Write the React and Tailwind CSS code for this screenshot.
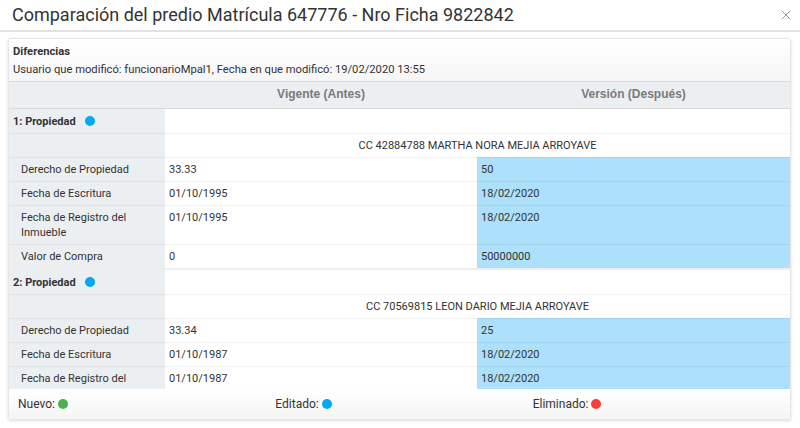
import React from 'react';
import { X } from 'lucide-react';

const propiedades = [
  {
    id: 1,
    titular: 'CC 42884788 MARTHA NORA MEJIA ARROYAVE',
    filas: [
      { label: 'Derecho de Propiedad', antes: '33.33', despues: '50' },
      { label: 'Fecha de Escritura', antes: '01/10/1995', despues: '18/02/2020' },
      { label: 'Fecha de Registro del Inmueble', antes: '01/10/1995', despues: '18/02/2020' },
      { label: 'Valor de Compra', antes: '0', despues: '50000000' },
    ],
  },
  {
    id: 2,
    titular: 'CC 70569815 LEON DARIO MEJIA ARROYAVE',
    filas: [
      { label: 'Derecho de Propiedad', antes: '33.34', despues: '25' },
      { label: 'Fecha de Escritura', antes: '01/10/1987', despues: '18/02/2020' },
      { label: 'Fecha de Registro del Inmueble', antes: '01/10/1987', despues: '18/02/2020' },
      { label: 'Valor de Compra', antes: '0', despues: '50000000' },
    ],
  },
];

const Dot = ({ color }) => <span className={`inline-block w-[10px] h-[10px] rounded-full ${color}`}></span>;

const PropiedadBody = ({ prop, first }) => (
  <tbody className={first ? '' : 'border-t-2 border-[#eeeeee]'}>
    {/* Encabezado de la propiedad */}
    <tr className="border-t border-black/5">
      <td className="bg-[#eceff1] pl-1 pr-1 pt-[5px] pb-[4px] align-top">
        <span className="font-bold text-[#333]">{prop.id}: Propiedad</span>
        <span className="ml-[9px] relative top-[1px]"><Dot color="bg-[#03a9f4]" /></span>
      </td>
      <td colSpan={2} className="bg-white"></td>
    </tr>
    <tr className="border-t border-black/5">
      <td className="bg-[#eceff1] py-[4px]">&nbsp;</td>
      <td colSpan={2} className="bg-white text-center py-[4px]">{prop.titular}</td>
    </tr>
    {prop.filas.map((f) => (
      <tr key={f.label} className="border-t border-black/5">
        <td className="bg-[#eceff1] pl-3 pr-2 py-[4px] align-top">{f.label}</td>
        <td className="bg-white px-1 py-[4px] align-top">{f.antes}</td>
        <td className="bg-[#ade0fa] px-1 py-[4px] align-top">{f.despues}</td>
      </tr>
    ))}
  </tbody>
);

const App = () => {
  return (
    <div className="w-[800px] h-[428px] bg-white overflow-hidden" style={{ fontFamily: 'Roboto, "Liberation Sans", sans-serif' }}>
      {/* Encabezado del modal */}
      <div className="h-[32px] flex items-center justify-between pl-3 pr-[6px] border-b-2 border-[#e2e2e2]">
        <h2 className="text-[18px] text-[#333] leading-none">Comparación del predio Matrícula 647776 - Nro Ficha 9822842</h2>
        <X className="w-[16px] h-[16px] text-[#9a9a9a]" strokeWidth={1.5} />
      </div>

      <div className="pl-2 pr-[9px] pt-[6px]">
        <div className="h-[382px] flex flex-col rounded-[3px] border border-[#e6e6e6] shadow-[0_1px_3px_rgba(0,0,0,0.15)] overflow-hidden">
          {/* Diferencias */}
          <div className="h-[43px] px-1 pt-[4px] bg-gradient-to-b from-white to-[#f6f6f6] border-b border-[#dcdcdc] text-[11.2px] text-[#333] leading-[18px]">
            <div className="font-bold">Diferencias</div>
            <div>Usuario que modificó: funcionarioMpal1, Fecha en que modificó: 19/02/2020 13:55</div>
          </div>

          {/* Tabla con scroll */}
          <div className="flex-1 overflow-hidden">
            <table className="w-full table-fixed border-collapse text-[11px] leading-[15px] text-[#333]">
              <colgroup>
                <col className="w-[156px]" />
                <col className="w-[312px]" />
                <col />
              </colgroup>
              <thead>
                <tr className="bg-[#eceff1] border-b border-[#dadada]">
                  <th className="h-[26px]"></th>
                  <th className="text-[12px] font-bold text-[#7a7a7a] text-center" style={{ fontFamily: '"Liberation Sans", Arial, sans-serif' }}>Vigente (Antes)</th>
                  <th className="text-[12px] font-bold text-[#7a7a7a] text-center" style={{ fontFamily: '"Liberation Sans", Arial, sans-serif' }}>Versión (Después)</th>
                </tr>
              </thead>
              {propiedades.map((p, i) => (
                <PropiedadBody key={p.id} prop={p} first={i === 0} />
              ))}
            </table>
          </div>

          {/* Leyenda */}
          <div className="h-[30px] grid grid-cols-3 items-center px-[9px] bg-gradient-to-b from-white to-[#f5f5f5] text-[12px] text-[#333]">
            <div className="flex items-center gap-[3px]">Nuevo: <Dot color="bg-[#4caf50]" /></div>
            <div className="flex items-center gap-[3px] pl-[3px]">Editado: <Dot color="bg-[#03a9f4]" /></div>
            <div className="flex items-center gap-[3px] pl-[6px]">Eliminado: <Dot color="bg-[#f44336]" /></div>
          </div>
        </div>
      </div>
    </div>
  );
};

export default App;
